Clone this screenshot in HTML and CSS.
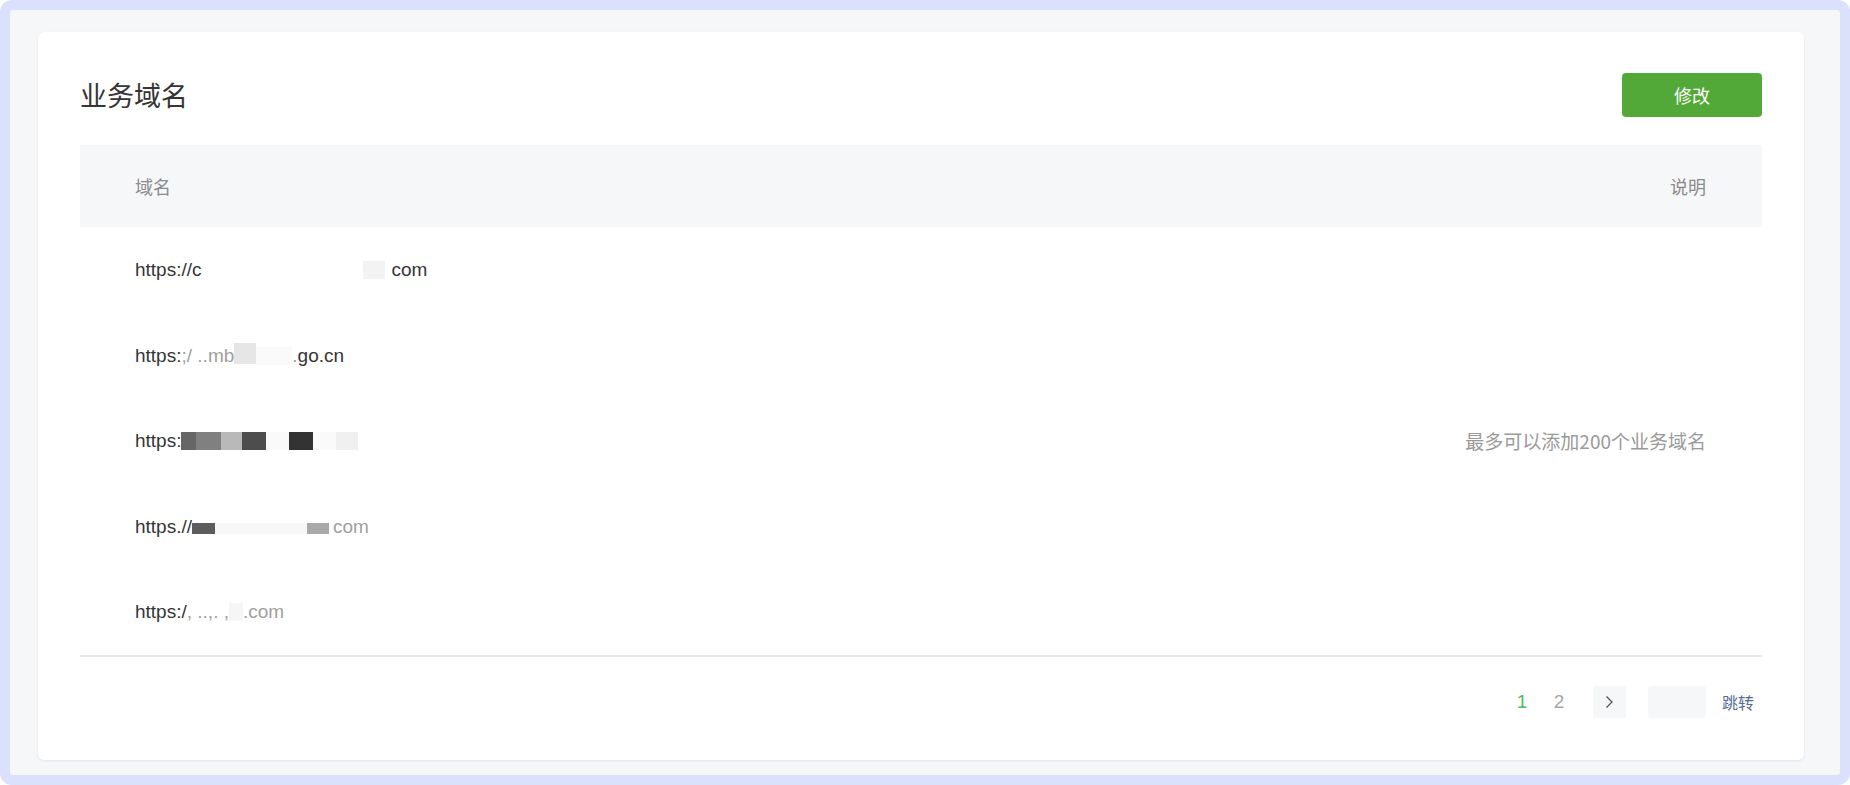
FILE: index.html
```html
<!DOCTYPE html>
<html lang="zh-CN">
<head>
<meta charset="utf-8">
<title>业务域名</title>
<link rel="stylesheet" href="styles.css">
</head>
<body>
<div class="window">
  <div class="desk">
    <div class="card">
      <div class="card-head">
        <h2 class="card-title">业务域名</h2>
        <a class="btn-primary" href="#">修改</a>
      </div>

      <table class="domain-table">
        <thead>
          <tr>
            <th class="col-domain">域名</th>
            <th class="col-note">说明</th>
          </tr>
        </thead>
        <tbody>
          <tr>
            <td class="col-domain">https://c<span class="mask" style="width:161px;background:#fff"></span><span class="mask" style="width:22px;background:#f3f3f3"></span><span class="gap"></span>com</td>
            <td class="col-note" rowspan="5">最多可以添加200个业务域名</td>
          </tr>
          <tr>
            <td class="col-domain">https:<span class="faint">;/ ..mb</span><span class="mask tall" style="width:22px;background:#e6e6e6"></span><span class="mask" style="width:36px;background:#fafafa"></span><span class="faint">.</span>go.cn</td>
          </tr>
          <tr>
            <td class="col-domain">https:<span class="mask" style="width:15px;background:#666"></span><span class="mask" style="width:25px;background:#808080"></span><span class="mask" style="width:21px;background:#b9b9b9"></span><span class="mask" style="width:24px;background:#4d4d4d"></span><span class="mask" style="width:23px;background:#fafafa"></span><span class="mask" style="width:24px;background:#333"></span><span class="mask" style="width:23px;background:#fafafa"></span><span class="mask" style="width:22px;background:#f0f0f0"></span></td>
          </tr>
          <tr>
            <td class="col-domain">https.//<span class="mask low" style="width:23px;background:#5c5c5c"></span><span class="mask low" style="width:92px;background:#f7f7f7"></span><span class="mask low" style="width:22px;background:#a9a9a9"></span><span class="gap-s"></span><span class="faint">com</span></td>
          </tr>
          <tr>
            <td class="col-domain">https:/<span class="faint">, ..,. ,</span><span class="mask" style="width:14px;background:#f6f6f6"></span><span class="faint">.com</span></td>
          </tr>
        </tbody>
      </table>

      <div class="pager">
        <span class="page-num current">1</span>
        <span class="page-num">2</span>
        <a class="page-next" href="#">
          <svg width="10" height="14" viewBox="0 0 10 14"><path d="M2.5 1.5 L8 7 L2.5 12.5" fill="none" stroke="#555" stroke-width="1.3"/></svg>
        </a>
        <input class="page-input" type="text">
        <a class="page-go" href="#">跳转</a>
      </div>
    </div>
  </div>
</div>
</body>
</html>
```

FILE: styles.css
```css
html, body {
	margin: 0;
	padding: 0;
	background: #ffffff;
}
body {
	font-family: "Liberation Sans", "Noto Sans CJK SC", sans-serif;
	color: #353535;
}
.window {
	height: 785px;
	box-sizing: border-box;
	padding: 10px;
	background: #dbe0fd;
	border-radius: 12px;
}
.desk {
	height: 100%;
	box-sizing: border-box;
	padding: 22px 36px 15px 28px;
	background: #f6f7f9;
	border-radius: 3px;
}
.card {
	height: 728px;
	box-sizing: border-box;
	padding: 41px 42px 0 42px;
	background: #ffffff;
	border-radius: 6px;
	box-shadow: 0 1px 3px rgba(0, 0, 0, 0.08);
}
.card-head {
	display: flex;
	align-items: center;
	justify-content: space-between;
	height: 44px;
	margin-bottom: 28px;
}
.card-title {
	margin: 0;
	font-family: "Noto Sans CJK SC", sans-serif;
	font-size: 27px;
	font-weight: normal;
	line-height: 44px;
	color: #353535;
}
.btn-primary {
	display: block;
	width: 140px;
	height: 44px;
	line-height: 44px;
	text-align: center;
	background: #53a938;
	color: #ffffff;
	border-radius: 4px;
	font-family: "Noto Sans CJK SC", sans-serif;
	font-size: 18px;
	text-decoration: none;
}

.domain-table {
	width: 100%;
	border-collapse: collapse;
	border-bottom: 2px solid #e6e6e6;
}
.domain-table th {
	height: 82px;
	padding: 0;
	background: #f6f7f9;
	font-family: "Noto Sans CJK SC", sans-serif;
	font-size: 18px;
	font-weight: normal;
	color: #8a8a8a;
}
.domain-table td {
	height: 85.6px;
	padding: 0;
	font-size: 19px;
	color: #353535;
	white-space: nowrap;
}
.domain-table .col-domain {
	text-align: left;
	padding-left: 55px;
}
.domain-table .col-note {
	text-align: right;
	padding-right: 56px;
}
.domain-table td.col-note {
	vertical-align: middle;
	font-family: "Noto Sans CJK SC", sans-serif;
	font-size: 19px;
	color: #9a9a9a;
}
.mask {
	display: inline-block;
	height: 18px;
	vertical-align: -3px;
}
.mask.tall {
	height: 21px;
	vertical-align: -2px;
}
.mask.low {
	height: 11px;
	vertical-align: -1px;
}
.gap {
	display: inline-block;
	width: 7px;
}
.gap-s {
	display: inline-block;
	width: 4px;
}
.faint {
	color: #a0a0a0;
}

.pager {
	display: flex;
	align-items: center;
	justify-content: flex-end;
	margin-top: 29px;
	padding-right: 8px;
	height: 32px;
}
.page-num {
	width: 32px;
	text-align: center;
	font-size: 19px;
	color: #a6a6a6;
}
.page-num.current {
	color: #4cbd5b;
	margin-right: 5px;
}
.page-next {
	display: flex;
	align-items: center;
	justify-content: center;
	width: 33px;
	height: 32px;
	margin-left: 18px;
	background: #f6f7f9;
	border-radius: 2px;
}
.page-input {
	width: 58px;
	height: 32px;
	box-sizing: border-box;
	margin: 0 0 0 22px;
	padding: 0;
	border: none;
	outline: none;
	background: #f6f7f9;
	border-radius: 3px;
}
.page-go {
	margin-left: 16px;
	font-family: "Noto Sans CJK SC", sans-serif;
	font-size: 16px;
	color: #576b95;
	text-decoration: none;
}
```
